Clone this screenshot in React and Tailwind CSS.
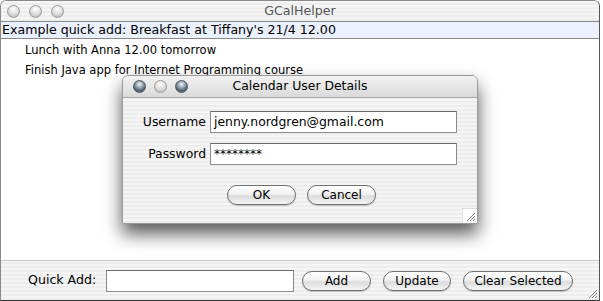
const stripes =
  "bg-[repeating-linear-gradient(0deg,#ededed_0px,#ededed_2px,#f5f5f5_2px,#f5f5f5_4px)]";

function Light({ active }) {
  return (
    <span
      className={
        active
          ? "block w-[13px] h-[13px] rounded-full border border-[#4a5560] bg-[radial-gradient(circle_at_50%_30%,#f0f4f8_0%,#9aa8b6_35%,#4d5b6a_70%,#8c9caa_100%)]"
          : "block w-[13px] h-[13px] rounded-full border border-[#9a9a9a] bg-[radial-gradient(circle_at_50%_30%,#ffffff_0%,#e2e2e2_45%,#c4c4c4_80%,#e4e4e4_100%)]"
      }
    />
  );
}

function AquaButton({ children, className }) {
  return (
    <button
      className={
        "h-[20px] rounded-full border border-[#6f6f6f] bg-[linear-gradient(180deg,#ffffff_0%,#f2f2f2_45%,#dcdcdc_55%,#f4f4f4_100%)] text-[12px] text-black leading-none flex items-center justify-center shadow-[0_1px_1px_rgba(0,0,0,0.2)] " +
        className
      }
    >
      {children}
    </button>
  );
}

function Grip() {
  return (
    <svg width="12" height="12" viewBox="0 0 12 12" className="block">
      <path d="M11 3 L3 11 M11 6 L6 11 M11 9 L9 11" stroke="#8a8a8a" strokeWidth="1" />
    </svg>
  );
}

function Field({ label, value, pwd }) {
  return (
    <div className="flex items-center">
      <span className="w-[84px] pr-[4px] text-right text-[12.4px] text-black">{label}</span>
      <div className="w-[247px] h-[22px] bg-white border border-[#8c8c8c] border-t-[#6a6a6a] flex items-center px-[3px] text-[12.4px] text-black">
        {pwd ? <span className="text-[12px]">{value}</span> : value}
      </div>
    </div>
  );
}

export default function App() {
  return (
    <div className="relative w-[603px] h-[301px] bg-white overflow-hidden font-['DejaVu_Sans',sans-serif]">
      <div className="w-[600px] h-[301px] flex flex-col rounded-t-[6px] border border-[#8a8a8a] border-r-[#555] border-b-[#333] overflow-hidden">
        <div className={"h-[20px] flex items-center " + stripes}>
          <div className="w-[80px] flex items-center gap-[9px] pl-[6px]">
            <Light />
            <Light />
            <Light />
          </div>
          <div className="flex-1 text-center text-[12.6px] text-[#555]">GCalHelper</div>
          <div className="w-[80px]" />
        </div>
        <div className="h-[18px] bg-[#eaf1fd] border-y border-[#8a8a8a] flex items-center pl-[1px] text-[12.6px] text-black whitespace-nowrap">
          Example quick add: Breakfast at Tiffany's 21/4 12.00
        </div>
        <div className="flex-1 bg-white pl-[24px] pt-[2px] text-[11.5px] text-black">
          <div className="h-[20px] flex items-center">Lunch with Anna 12.00 tomorrow</div>
          <div className="h-[19px] flex items-center">Finish Java app for Internet Programming course</div>
        </div>
        <div className={"h-[40px] border-t border-[#c8c8c8] flex items-center relative " + stripes}>
          <span className="pl-[27px] w-[105px] text-[12.6px] text-black">Quick Add:</span>
          <div className="w-[188px] h-[22px] bg-white border border-[#8c8c8c] border-t-[#6a6a6a]" />
          <AquaButton className="ml-[8px] w-[69px]">Add</AquaButton>
          <AquaButton className="ml-[12px] w-[68px]">Update</AquaButton>
          <AquaButton className="ml-[12px] w-[110px]">Clear Selected</AquaButton>
          <div className="absolute right-[1px] bottom-[1px]">
            <Grip />
          </div>
        </div>
      </div>

      <div className="absolute left-[122px] top-[75px] w-[356px] h-[149px] flex flex-col rounded-t-[6px] border border-[#999] shadow-[0_10px_18px_rgba(0,0,0,0.65)] overflow-hidden">
        <div className="h-[22px] flex items-center bg-[linear-gradient(180deg,#f2f2f2_0%,#dadada_100%)] border-b border-[#aaa]">
          <div className="w-[80px] flex items-center gap-[8px] pl-[10px]">
            <Light active />
            <Light />
            <Light active />
          </div>
          <div className="flex-1 text-center text-[12.4px] text-black">Calendar User Details</div>
          <div className="w-[80px]" />
        </div>
        <div className={"flex-1 flex flex-col pt-[13px] relative " + stripes}>
          <div className="pl-[3px] flex flex-col gap-[10px]">
            <Field label="Username" value="jenny.nordgren@gmail.com" />
            <Field label="Password" value="********" pwd />
          </div>
          <div className="flex pl-[104px] gap-[11px] mt-[20px]">
            <AquaButton className="w-[69px]">OK</AquaButton>
            <AquaButton className="w-[69px]">Cancel</AquaButton>
          </div>
          <div className="absolute right-0 bottom-0 w-[15px] h-[15px] bg-white border-l border-t border-[#ddd] flex items-end justify-end pr-[1px] pb-[1px]">
            <Grip />
          </div>
        </div>
      </div>
    </div>
  );
}
